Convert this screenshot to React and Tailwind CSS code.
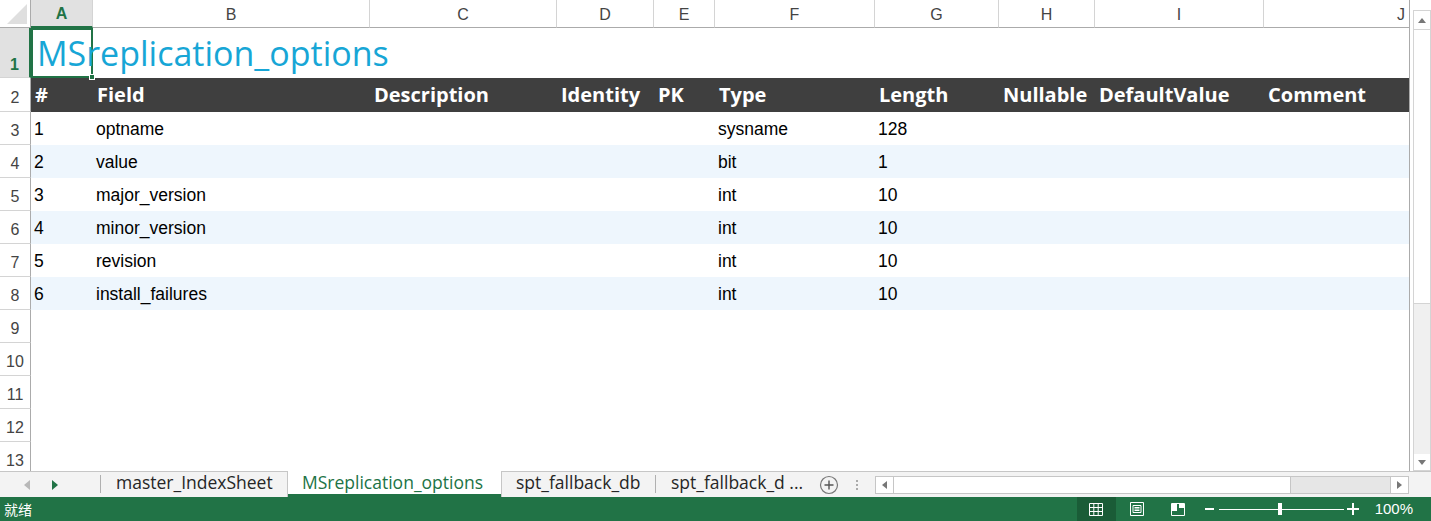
import React from 'react';

const cols = [
  { key: 'A', w: 'w-[62px]' },
  { key: 'B', w: 'w-[277px]' },
  { key: 'C', w: 'w-[187px]' },
  { key: 'D', w: 'w-[97px]' },
  { key: 'E', w: 'w-[61px]' },
  { key: 'F', w: 'w-[160px]' },
  { key: 'G', w: 'w-[124px]' },
  { key: 'H', w: 'w-[96px]' },
  { key: 'I', w: 'w-[169px]' },
  { key: 'J', w: 'w-[145px]' },
];

const header = ['#', 'Field', 'Description', 'Identity', 'PK', 'Type', 'Length', 'Nullable', 'DefaultValue', 'Comment'];

const rows = [
  ['1', 'optname', '', '', '', 'sysname', '128'],
  ['2', 'value', '', '', '', 'bit', '1'],
  ['3', 'major_version', '', '', '', 'int', '10'],
  ['4', 'minor_version', '', '', '', 'int', '10'],
  ['5', 'revision', '', '', '', 'int', '10'],
  ['6', 'install_failures', '', '', '', 'int', '10'],
];

const sans = { fontFamily: '"Open Sans", "Noto Sans", sans-serif' };
const arial = { fontFamily: '"Liberation Sans", Arial, sans-serif' };

function RowHead({ n, h, active }) {
  return (
    <div
      className={`w-[31px] shrink-0 ${h} flex items-end justify-center border-b border-[#d4d4d4] ${
        active ? 'bg-[#e1e1e1] text-[#217346] font-bold border-r-2 border-r-[#217346] pb-0' : 'bg-white text-[#444] border-r border-r-[#ababab] pb-[1px]'
      } text-[16px]`}
      style={arial}
    >
      {n}
    </div>
  );
}

function ColumnHeader() {
  return (
    <div className="flex h-[28px] shrink-0" style={arial}>
      <div className="w-[31px] shrink-0 border-r border-b border-[#ababab] bg-white flex items-end justify-end">
        <svg width="20" height="20" viewBox="0 0 20 20" className="mb-[3px] mr-[3px]">
          <polygon points="20,0 20,20 0,20" fill="#dfdfdf" />
        </svg>
      </div>
      {cols.map((c, i) => (
        <div
          key={c.key}
          className={`${c.w} shrink-0 flex items-end pb-0 text-[16px] ${
            i === 0
              ? 'bg-[#e1e1e1] text-[#217346] font-bold border-b-2 border-b-[#217346] justify-center'
              : 'bg-white text-[#444] border-b border-b-[#ababab]'
          } ${i === cols.length - 1 ? 'justify-end pr-[4px]' : 'justify-center border-r border-r-[#d4d4d4]'}`}
        >
          {c.key}
        </div>
      ))}
    </div>
  );
}

function VScroll() {
  return (
    <div className="w-[21px] shrink-0 pt-[10px] pl-[3px] bg-white flex flex-col">
      <div className="flex-1 flex flex-col border border-[#d4d4d4] bg-[#f0f0f0]">
        <div className="h-[18px] bg-white flex items-center justify-center">
          <svg width="8" height="5" viewBox="0 0 8 5"><polygon points="4,0 8,5 0,5" fill="#777" /></svg>
        </div>
        <div className="h-[275px] bg-white border-t border-b border-[#d4d4d4]" />
        <div className="flex-1" />
        <div className="h-[16px] bg-white flex items-center justify-center">
          <svg width="8" height="5" viewBox="0 0 8 5"><polygon points="0,0 8,0 4,5" fill="#777" /></svg>
        </div>
      </div>
    </div>
  );
}

function Tab({ label, w, active }) {
  return (
    <div
      className={`${w} shrink-0 h-full flex items-center whitespace-nowrap text-[17.5px] ${
        active
          ? 'bg-white text-[#217346] border-b-[3px] border-[#217346] pl-[14px] shadow-[1px_0_0_#c6c6c6,-1px_0_0_#c6c6c6]'
          : 'text-[#262626] pl-[15px] pb-[3px]'
      }`}
      style={sans}
    >
      {label}
    </div>
  );
}

function Sep() {
  return <div className="w-px h-[18px] shrink-0 bg-[#b0b0b0]" />;
}

export default function App() {
  return (
    <div className="w-[1431px] h-[521px] flex flex-col overflow-hidden bg-white select-none">
      <div className="flex h-[471px] shrink-0">
        <div className="w-[1410px] shrink-0 flex flex-col border-r border-[#ababab] overflow-hidden">
          <ColumnHeader />

          {/* row 1: title */}
          <div className="flex h-[50px] shrink-0">
            <RowHead n="1" h="h-[50px]" active />
            <div className="w-[62px] shrink-0 relative border-2 border-[#217346] flex items-center">
              <span className="whitespace-nowrap pl-[4px] text-[34px] text-[#17a6d6]" style={sans}>
                MSreplication_options
              </span>
              <div className="absolute -right-[4px] -bottom-[4px] w-[6px] h-[6px] bg-[#217346] border border-white" />
            </div>
          </div>

          {/* row 2: header */}
          <div className="flex h-[34px] shrink-0">
            <RowHead n="2" h="h-[34px]" />
            {cols.map((c, i) => (
              <div
                key={c.key}
                className={`${c.w} shrink-0 bg-[#3f3f3f] text-white font-bold text-[20px] flex items-center pl-[4px] whitespace-nowrap`}
                style={sans}
              >
                {header[i]}
              </div>
            ))}
          </div>

          {rows.map((r, ri) => (
            <div key={ri} className="flex h-[33px] shrink-0">
              <RowHead n={String(ri + 3)} h="h-[33px]" />
              {cols.map((c, i) => (
                <div
                  key={c.key}
                  className={`${c.w} shrink-0 ${ri % 2 === 1 ? 'bg-[#eef6fd]' : 'bg-white'} text-black text-[17.5px] flex items-center pl-[3px] pt-[1px] whitespace-nowrap`}
                  style={arial}
                >
                  {r[i] || ''}
                </div>
              ))}
            </div>
          ))}

          {[9, 10, 11, 12, 13].map((n) => (
            <div key={n} className="flex h-[33px] shrink-0">
              <RowHead n={String(n)} h="h-[33px]" />
            </div>
          ))}
        </div>
        <VScroll />
      </div>

      {/* sheet tabs */}
      <div className="h-[26px] shrink-0 flex items-stretch bg-[#f3f3f3] border-t border-[#c6c6c6]">
        <div className="w-[875px] shrink-0 flex items-stretch">
          <div className="w-[100px] shrink-0 flex items-center pl-[24px] gap-[22px]">
            <svg width="6" height="10" viewBox="0 0 6 10"><polygon points="6,0 6,10 0,5" fill="#b8b8b8" /></svg>
            <svg width="6" height="10" viewBox="0 0 6 10"><polygon points="0,0 6,5 0,10" fill="#217346" /></svg>
          </div>
          <div className="flex items-center -mt-px">
            <Sep />
            <Tab label="master_IndexSheet" w="w-[186px]" />
            <div className="w-px shrink-0" />
            <Tab label="MSreplication_options" w="w-[213px]" active />
            <Tab label="spt_fallback_db" w="w-[154px]" />
            <Sep />
            <Tab label="spt_fallback_d ..." w="w-[161px]" />
          </div>
          <div className="flex items-center pl-[2px]">
            <svg width="20" height="20" viewBox="0 0 20 20">
              <circle cx="10" cy="10" r="8.5" fill="none" stroke="#777" strokeWidth="1.2" />
              <path d="M10 5.5v9M5.5 10h9" stroke="#555" strokeWidth="1.4" />
            </svg>
            <div className="ml-[17px] flex flex-col gap-[2px]">
              <div className="w-[2px] h-[2px] bg-[#aaa]" />
              <div className="w-[2px] h-[2px] bg-[#aaa]" />
              <div className="w-[2px] h-[2px] bg-[#aaa]" />
            </div>
          </div>
        </div>
        <div className="flex items-center">
          <div className="w-[534px] h-[18px] flex border border-[#c6c6c6] bg-[#e6e6e6]">
            <div className="w-[18px] bg-white border-r border-[#c6c6c6] flex items-center justify-center">
              <svg width="5" height="8" viewBox="0 0 5 8"><polygon points="5,0 5,8 0,4" fill="#777" /></svg>
            </div>
            <div className="w-[397px] bg-white border-r border-[#c6c6c6]" />
            <div className="flex-1" />
            <div className="w-[18px] bg-white border-l border-[#c6c6c6] flex items-center justify-center">
              <svg width="5" height="8" viewBox="0 0 5 8"><polygon points="0,0 5,4 0,8" fill="#777" /></svg>
            </div>
          </div>
        </div>
      </div>

      {/* status bar */}
      <div className="h-[24px] shrink-0 bg-[#217346] flex items-center text-white">
        <span className="pl-[4px] text-[14px]" style={{ fontFamily: '"Noto Sans CJK SC", sans-serif' }}>就绪</span>
        <div className="flex-1" />
        <div className="w-[39px] h-full bg-[#1a5c37] flex items-center justify-center">
          <svg width="14" height="13" viewBox="0 0 14 13">
            <path d="M0.5 0.5h13v12h-13z M0.5 4.5h13 M0.5 8.5h13 M4.8 0.5v12 M9.2 0.5v12" fill="none" stroke="#fff" strokeWidth="1" />
          </svg>
        </div>
        <div className="w-[42px] flex items-center justify-center">
          <svg width="14" height="14" viewBox="0 0 14 14">
            <path d="M0.5 0.5h13v13h-13z" fill="none" stroke="#fff" strokeWidth="1" />
            <path d="M3 3.5h8v7h-8z M4.5 5.5h5 M4.5 7h5 M4.5 8.5h5" fill="none" stroke="#fff" strokeWidth="1" />
          </svg>
        </div>
        <div className="w-[40px] flex items-center justify-center">
          <svg width="14" height="13" viewBox="0 0 14 13">
            <path d="M0.5 0.5h13v12h-13z" fill="none" stroke="#fff" strokeWidth="1" />
            <path d="M1 1h5v7h-5z M8 1h5v4h-5z" fill="#fff" />
          </svg>
        </div>
        <div className="ml-[7px] flex items-center">
          <div className="w-[9px] h-[2px] bg-white" />
          <div className="ml-[5px] w-[125px] h-px bg-white relative flex items-center">
            <div className="absolute left-[59px] w-[4px] h-[12px] bg-white" />
          </div>
          <svg width="12" height="12" viewBox="0 0 12 12" className="ml-[3px]">
            <path d="M6 0v12M0 6h12" stroke="#fff" strokeWidth="2" />
          </svg>
        </div>
        <span className="ml-[16px] pr-[18px] text-[15px]" style={arial}>100%</span>
      </div>
    </div>
  );
}
